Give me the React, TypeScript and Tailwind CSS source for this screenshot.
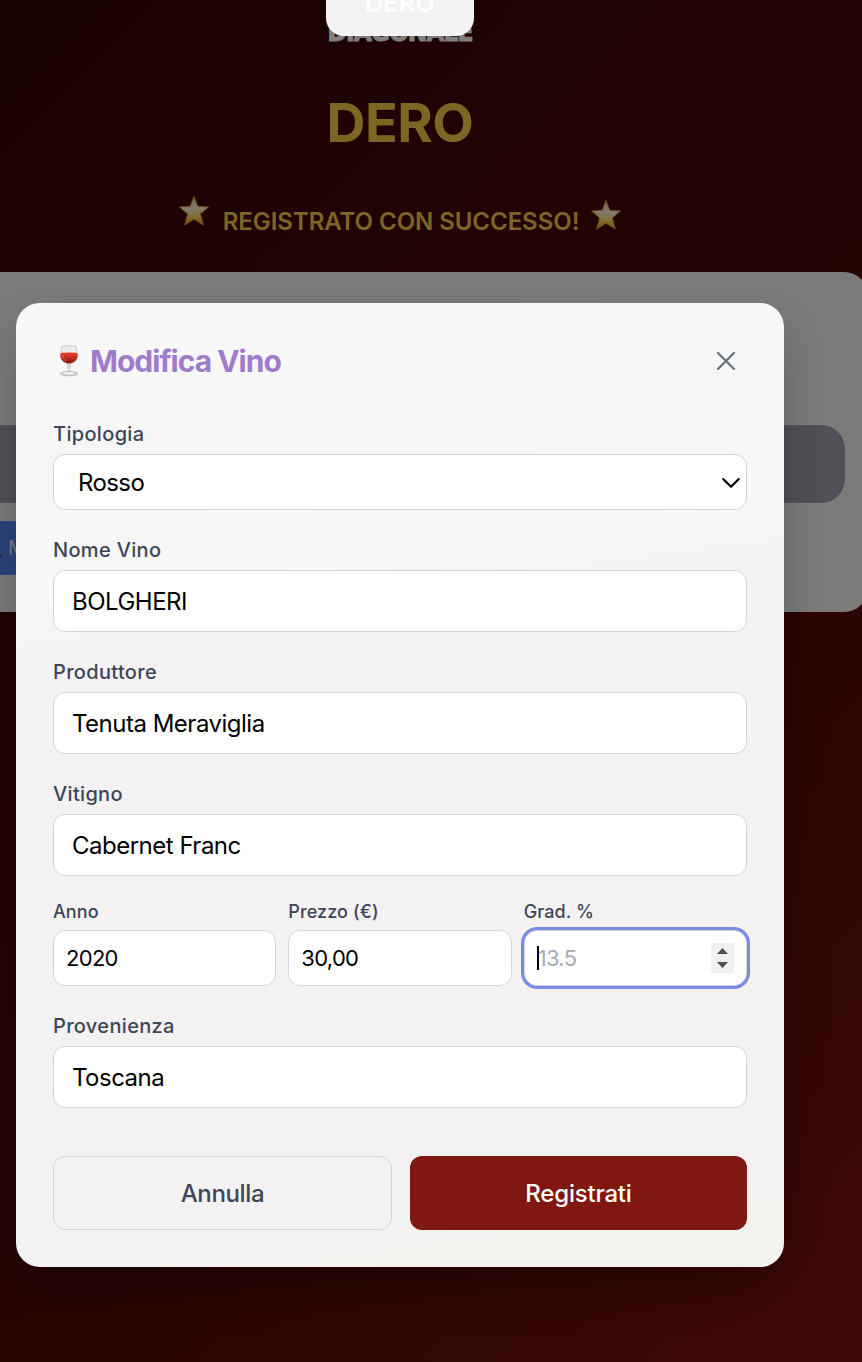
import React from "react";

function Star({ id }: { id: string }) {
  return (
    <svg viewBox="0 0 30 30" className="h-8 w-8 shrink-0">
      <defs>
        <linearGradient id={id} x1="0" y1="0" x2="0" y2="1">
          <stop offset="0" stopColor="#74673a" />
          <stop offset="0.4" stopColor="#7f7b69" />
          <stop offset="0.62" stopColor="#7d7347" />
          <stop offset="0.8" stopColor="#7d641c" />
          <stop offset="1" stopColor="#795006" />
        </linearGradient>
      </defs>
      <path d="M15 1.4 18.6 10.6 28.6 11.2 21 17.8 23.8 28.2 15 22.8 6.2 28.2 9 17.8 1.4 11.2 11.4 10.6Z" fill={`url(#${id})`} stroke="#6c481b" strokeWidth="0.9" strokeLinejoin="round" />
    </svg>
  );
}

function WineGlass() {
  return (
    <svg viewBox="0 0 20 32" className="h-8 w-5 shrink-0">
      <defs>
        <linearGradient id="wine" x1="0" y1="0" x2="0" y2="1">
          <stop offset="0" stopColor="#e8432f" />
          <stop offset="0.5" stopColor="#c92c1e" />
          <stop offset="1" stopColor="#7d0f08" />
        </linearGradient>
        <linearGradient id="stem" x1="0" y1="0" x2="1" y2="0">
          <stop offset="0" stopColor="#a5a5a5" />
          <stop offset="0.5" stopColor="#f5f5f5" />
          <stop offset="1" stopColor="#a0a0a0" />
        </linearGradient>
      </defs>
      <path d="M3 1.4C5 .6 15 .6 17 1.4L18.6 9.5C19.2 15 14.5 19 10 19S.8 15 1.4 9.5Z" fill="#ececec" stroke="#bdbdbd" strokeWidth="0.7" />
      <path d="M1.7 8C6 7.2 14 7.2 18.3 8C20 14 15 18.4 10 18.4S0 14 1.7 8Z" fill="url(#wine)" />
      <path d="M3.6 10Q4 14 7 16" fill="none" stroke="#ee7564" strokeWidth="0.8" />
      <path d="M8.4 19H11.6L11.2 27H8.8Z" fill="url(#stem)" />
      <ellipse cx="10" cy="28.6" rx="8.8" ry="2.2" fill="#dadada" stroke="#acacac" strokeWidth="0.7" />
      <ellipse cx="10" cy="28" rx="5" ry="1" fill="#f3f3f3" />
    </svg>
  );
}

function Field({ label, value }: { label: string; value: string }) {
  return (
    <label className="mt-[26px] block">
      <span className="block h-[34px] text-[20px] leading-[28px] font-medium tracking-[0.33px] text-[#3d4656]">{label}</span>
      <input defaultValue={value} className="block h-[62px] w-full rounded-[12px] border border-[#d1d5db] bg-white px-[18px] text-[24px] tracking-[-0.5px] text-black outline-none" />
    </label>
  );
}

function SmallField({ label, children, focused = false }: { label: string; children: React.ReactNode; focused?: boolean }) {
  return (
    <div className="min-w-0 flex-1">
      <div className="h-[30px] text-[18px] leading-[24px] font-medium tracking-[0.1px] text-[#3d4656]">{label}</div>
      <div className={focused
        ? "flex h-14 items-center rounded-[13px] border border-[#d1d5db] bg-white px-3 text-[22px] tracking-[-0.7px] ring-[3px] ring-[#788ce2]"
        : "flex h-14 items-center rounded-[12px] border border-[#d1d5db] bg-white px-3 pt-px text-[22px] tracking-[-0.7px]"}>
        {children}
      </div>
    </div>
  );
}

export default function App() {
  return (
    <div className="relative h-[1362px] w-[862px] overflow-hidden bg-[linear-gradient(135deg,#180202_0%,#1f0304_20%,#220402_40%,#2a0503_65%,#340705_85%,#3e0808_100%)] font-['Inter',sans-serif]">
      <header className="flex h-[272px] w-[800px] flex-col items-center">
        <div className="mt-[12px] h-[40px] text-[26px] leading-[40px] font-bold tracking-[-1px] text-[#7f7f7f] [-webkit-text-stroke:1px_#7f7f7f] [font-family:'DejaVu_Sans_Condensed','DejaVu_Sans',sans-serif] [font-stretch:condensed]">DIAGONALE</div>
        <div className="mt-[39px] h-[64px] text-[54px] leading-[64px] font-bold tracking-[-0.5px] text-[#7d6624]">DERO</div>
        <div className="mt-[40px] flex h-[42px] w-[444px] items-start justify-between">
          <Star id="starLeft" />
          <span className="mt-[11px] ml-[2px] text-[24px] leading-[32px] font-semibold tracking-[-0.05px] whitespace-nowrap text-[#7d6624]">REGISTRATO CON SUCCESSO!</span>
          <div className="mt-1"><Star id="starRight" /></div>
        </div>
      </header>
      <section className="-ml-6 flex h-[340px] w-[892px] flex-col rounded-[24px] bg-[#7c7979] pt-[153px]">
        <div className="h-[78px] w-[869px] rounded-[24px] bg-[#505157]" />
        <div className="mt-[18px] ml-[10px] flex h-[54px] w-[200px] items-center bg-[#2c447c] pl-[22px] text-[20px] text-[#7c7c7c]">
          <span className="-ml-[9px] mr-[7px] h-[3px] w-[2px] translate-y-[7px] rotate-45 bg-[#242424]" />M
        </div>
      </section>

      <div className="absolute top-[-40px] left-[326px] flex h-[76px] w-[148px] items-end justify-center rounded-[18px] bg-[#f3f3f3] pb-[18px] text-[25px] leading-[30px] font-bold tracking-[0.3px] text-white">DERO</div>

      <div role="dialog" className="absolute top-[303px] left-4 flex h-[964px] w-[768px] flex-col rounded-[24px] bg-[linear-gradient(172deg,#f9f9f9_0%,#f6f6f6_16%,#f8f8f8_27%,#f4f2f3_35%,#f4f1f3_88%,#f4f3f0_94%)] px-[37px] pt-10 shadow-[0_25px_50px_-12px_rgba(0,0,0,0.35)]">
        <div className="flex h-9 items-center">
          <div className="ml-[6px] flex items-center gap-[11px]"><WineGlass /><h2 className="text-[30px] leading-9 font-bold tracking-[-1px] text-[#a07bcd]">Modifica Vino</h2></div>
          <button className="mr-3 ml-auto">
            <svg viewBox="0 0 18 18" className="h-[18px] w-[18px]" fill="none" stroke="#6b7280" strokeWidth="2.3" strokeLinecap="round"><path d="M1 1 17 17M17 1 1 17" /></svg>
          </button>
        </div>
        <div className="mt-[41px] h-[34px] text-[20px] leading-[28px] font-medium tracking-[0.33px] text-[#3d4656]">Tipologia</div>
        <div className="flex h-14 items-center rounded-[12px] border border-[#d1d5db] bg-white pr-[6px] pl-[24px] text-[24px] tracking-[-0.6px]">
          <span className="pt-[2px]">Rosso</span>
          <svg viewBox="0 0 18 10" className="mt-px ml-auto h-[10px] w-[18px]" fill="none" stroke="black" strokeWidth="2.2" strokeLinecap="round" strokeLinejoin="round"><path d="M1.2 1 9 8.8 16.8 1" /></svg>
        </div>
        <Field label="Nome Vino" value="BOLGHERI" />
        <Field label="Produttore" value="Tenuta Meraviglia" />
        <Field label="Vitigno" value="Cabernet Franc" />
        <div className="mt-6 flex gap-3">
          <SmallField label="Anno">2020</SmallField>
          <SmallField label="Prezzo (€)">30,00</SmallField>
          <SmallField label="Grad. %" focused>
            <span className="h-6 w-[2px] bg-black" />
            <span className="-ml-px text-[#a5abb6]">13.5</span>
            <svg viewBox="0 0 23 30" className="ml-auto h-[30px] w-[23px]"><path d="M0 0H23V30H0Z" fill="#f0f0f0" /><path d="M6 11 11.5 5 17 11ZM6 19H17L11.5 25Z" fill="#505050" /></svg>
          </SmallField>
        </div>
        <Field label="Provenienza" value="Toscana" />
        <div className="mt-12 flex h-[74px] shrink-0 gap-[18px]">
          <button className="w-[339px] rounded-[12px] border border-[#d1d5db] pt-[2px] text-[24px] font-medium tracking-[-0.35px] text-[#3d4656]">Annulla</button>
          <button className="w-[337px] rounded-[12px] bg-[#7f1810] pt-[2px] text-[24px] font-medium tracking-[-0.2px] text-white">Registrati</button>
        </div>
      </div>
    </div>
  );
}
